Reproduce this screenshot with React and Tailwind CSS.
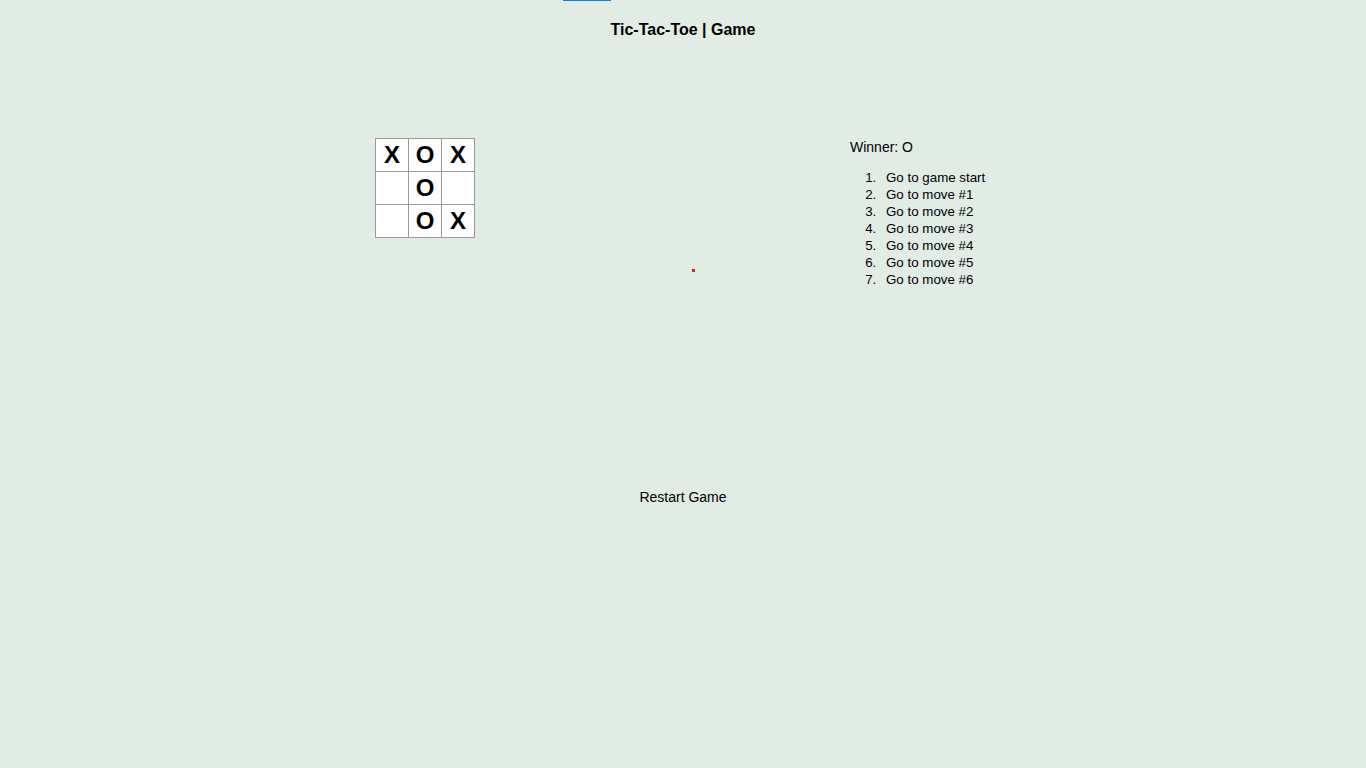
export default function App() {
  const board = ["X", "O", "X", "", "O", "", "", "O", "X"];
  const moves = [
    "Go to game start",
    "Go to move #1",
    "Go to move #2",
    "Go to move #3",
    "Go to move #4",
    "Go to move #5",
    "Go to move #6",
  ];
  return (
    <div className="relative min-h-screen bg-[#e1ece5] text-black font-['Liberation_Sans',Arial,sans-serif]">
      <div className="ml-[563px] w-[48px] h-px bg-[#0a84e0]" />
      <h1 className="mt-[20px] text-center text-[16px] leading-[18px] font-bold">Tic-Tac-Toe | Game</h1>
      <div className="mt-[99px] flex h-[200px]">
        <div className="ml-[375px] w-[100px]">
          {[0, 1, 2].map((r) => (
            <div key={r} className="flex -mt-px first:mt-0">
              {[0, 1, 2].map((c) => (
                <div
                  key={c}
                  className="w-[34px] h-[34px] -mr-px border border-[#999] bg-white flex items-center justify-center text-[24px] font-bold leading-[34px]"
                >
                  {board[r * 3 + c]}
                </div>
              ))}
            </div>
          ))}
        </div>
        <div className="ml-[375px] pt-px">
          <div className="text-[14px] leading-[16px]">Winner: O</div>
          <ol className="mt-[14px] pl-[30px] list-decimal text-[13.33px]">
            {moves.map((m) => (
              <li key={m} className="leading-[17px]">
                <button className="px-[6px] py-px leading-[15px] text-[13.33px]">{m}</button>
              </li>
            ))}
          </ol>
        </div>
      </div>
      <div className="mt-[147px] text-center">
        <button className="text-[14px] leading-[16px]">Restart Game</button>
      </div>
      <div className="absolute left-[692px] top-[269px] w-[3px] h-[3px] bg-[#e02424]" />
    </div>
  );
}
